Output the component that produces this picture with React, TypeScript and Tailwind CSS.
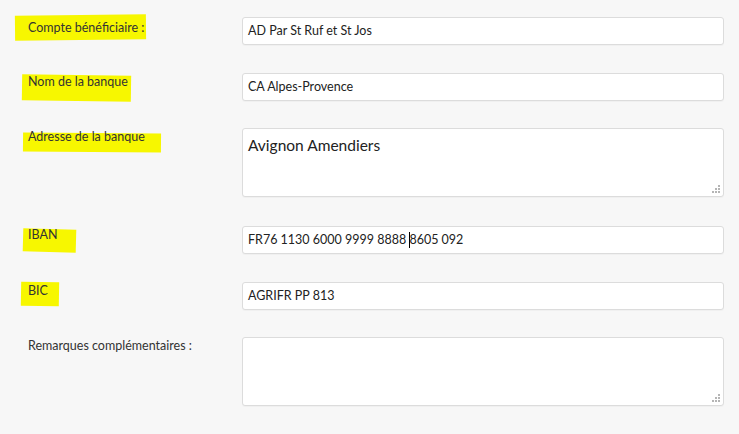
const font = { fontFamily: '"Source Sans Pro", Lato, "Noto Sans", sans-serif' };

function Grip() {
  return (
    <span className="absolute right-[3px] bottom-[3px] grid grid-cols-3 gap-[1px]">
      <i className="w-[2px] h-[2px]" />
      <i className="w-[2px] h-[2px]" />
      <i className="w-[2px] h-[2px] bg-[#b5b5b5]" />
      <i className="w-[2px] h-[2px]" />
      <i className="w-[2px] h-[2px] bg-[#b5b5b5]" />
      <i className="w-[2px] h-[2px] bg-[#b5b5b5]" />
      <i className="w-[2px] h-[2px] bg-[#b5b5b5]" />
      <i className="w-[2px] h-[2px] bg-[#b5b5b5]" />
      <i className="w-[2px] h-[2px] bg-[#b5b5b5]" />
    </span>
  );
}

function Label({ text, mark, extra }: { text: string; mark?: string; extra?: string }) {
  return (
    <div className={`w-[242px] shrink-0 pl-[28px] text-[12.5px] leading-[18px] text-[#333] ${extra ?? ""}`}>
      <span className="relative inline-block">
        {mark && <span className={`absolute bg-[#f7f700] ${mark}`} />}
        <span className="relative">{text}</span>
      </span>
    </div>
  );
}

function Field({ children, tall }: { children?: React.ReactNode; tall?: boolean }) {
  return (
    <div
      className={`relative w-[482px] bg-white border border-[#dcdcdc] rounded-[3px] shadow-[0_1px_1px_rgba(0,0,0,0.03)] pl-[5px] text-[#222] ${
        tall ? "h-[69px] pt-[5px] text-[15.5px] leading-[22px]" : "h-[28px] text-[12.5px] leading-[26px]"
      }`}
    >
      {children}
      {tall && <Grip />}
    </div>
  );
}

export default function App() {
  return (
    <div className="w-[739px] h-[434px] bg-[#f7f7f7] pt-[17px]" style={font}>
      <div className="flex">
        <Label text="Compte bénéficiaire :" extra="pt-[2px]" mark="-left-[13px] -right-[2px] -top-[4px] -bottom-[3px] -rotate-[0.6deg]" />
        <Field>AD Par St Ruf et St Jos</Field>
      </div>
      <div className="flex mt-[28px]">
        <Label text="Nom de la banque" mark="-left-[6px] -right-[3px] top-[2px] -bottom-[10px] rotate-[0.8deg]" />
        <Field>CA Alpes-Provence</Field>
      </div>
      <div className="flex mt-[27px]">
        <Label text="Adresse de la banque" mark="-left-[5px] -right-[16px] top-[5px] -bottom-[6px] rotate-[0.5deg]" />
        <Field tall>Avignon Amendiers</Field>
      </div>
      <div className="flex mt-[29px]">
        <Label text="IBAN" mark="-left-[5px] -right-[19px] top-[3px] -bottom-[8px] rotate-[1.5deg]" />
        <Field>
          FR76 1130 6000 9999 8888 <span className="inline-block w-[1px] h-[16px] bg-black align-[-4px] -mr-[1px]" />8605 092
        </Field>
      </div>
      <div className="flex mt-[28px]">
        <Label text="BIC" mark="-left-[7px] -right-[11px] -top-[0px] -bottom-[6px] rotate-[1deg]" />
        <Field>AGRIFR PP 813</Field>
      </div>
      <div className="flex mt-[27px]">
        <Label text="Remarques complémentaires :" />
        <Field tall />
      </div>
    </div>
  );
}
